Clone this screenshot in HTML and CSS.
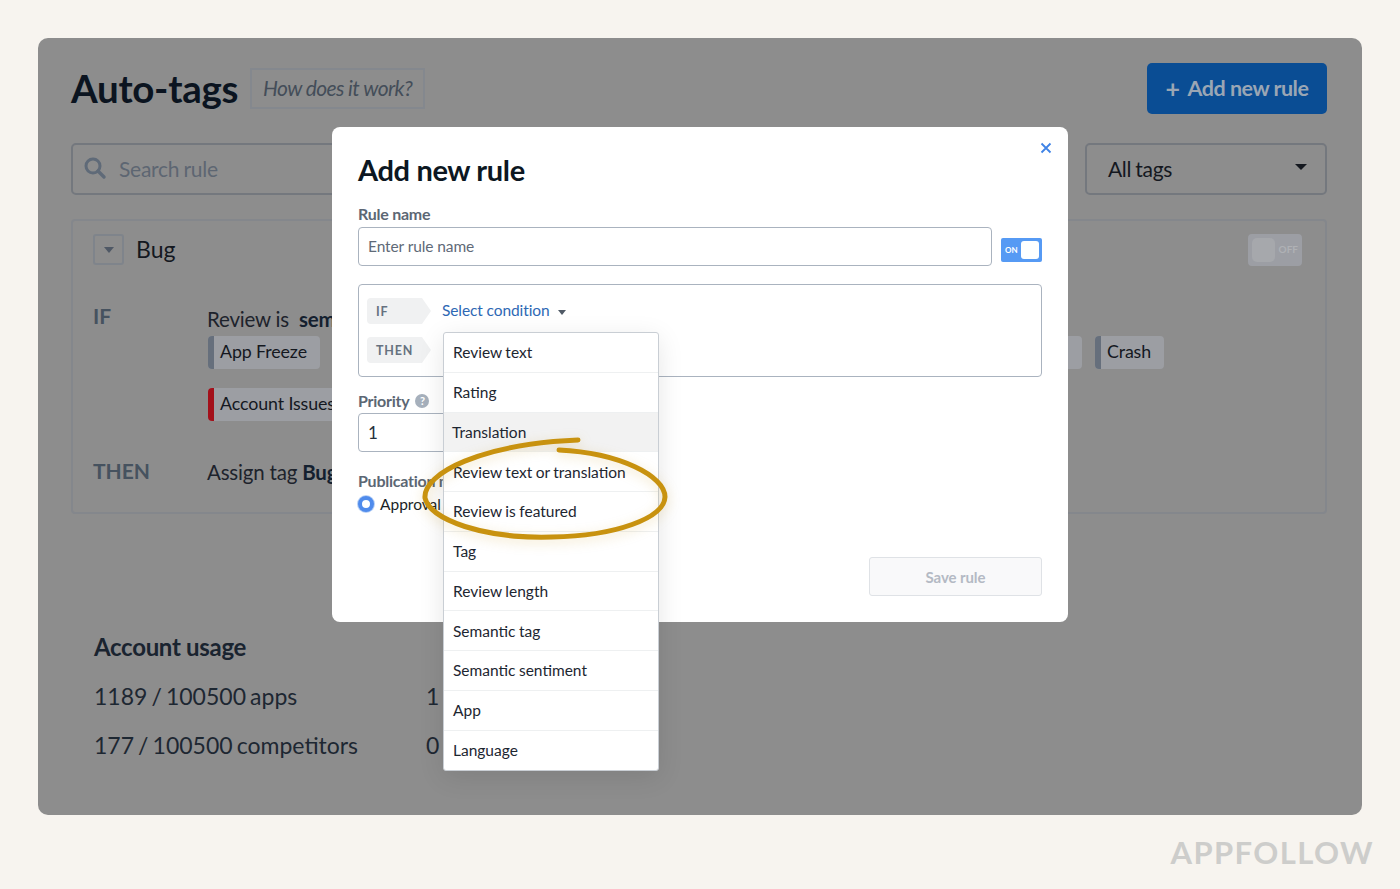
FILE: index.html
```html
<!DOCTYPE html>
<html lang="en">
<head>
<meta charset="utf-8">
<title>Auto-tags</title>
<link rel="stylesheet" href="styles.css">
</head>
<body>
<main class="card">
  <header class="top">
    <h1 class="title">Auto-tags</h1>
    <span class="how">How does it work?</span>
    <span class="add-btn"><span class="plus">+</span>Add new rule</span>
  </header>
  <div class="filters">
    <div class="search">
      <svg class="search-ico" width="24" height="24" viewBox="0 0 24 24"><circle cx="10" cy="10" r="7" fill="none" stroke="#5f6a78" stroke-width="3"/><path d="M15 15l6 6" stroke="#5f6a78" stroke-width="3.4" stroke-linecap="round"/></svg>
      <span>Search rule</span>
    </div>
    <div class="all-tags"><span>All tags</span><i class="caret dark"></i></div>
  </div>
  <section class="rule">
    <div class="rule-head">
      <span class="exp"><i class="caret small"></i></span>
      <span class="rule-name">Bug</span>
      <span class="off"><i class="off-knob"></i><b>OFF</b></span>
    </div>
    <div class="rule-body">
      <div class="rule-row">
        <span class="kw">IF</span>
        <div class="rule-main">
          <p class="line">Review is&nbsp; <b>semantic</b></p>
          <div class="chips">
            <span class="chip"><i class="bar gray"></i>App Freeze</span>
            <span class="chip filler"><i class="bar yellow"></i></span>
            <span class="chip"><i class="bar gray"></i>Crash</span>
            <span class="chip"><i class="bar red"></i>Account Issues</span>
          </div>
        </div>
      </div>
      <div class="rule-row then">
        <span class="kw">THEN</span>
        <p class="line">Assign tag <b>Bug</b></p>
      </div>
    </div>
  </section>
  <section class="usage">
    <h2 class="usage-title">Account usage</h2>
    <div class="usage-grid">
      <span>1189 / 100500 apps</span><span>1</span>
      <span>177 / 100500 competitors</span><span>0</span>
    </div>
  </section>
</main>
<footer class="mark">APPFOLLOW</footer>

<div class="modal">
  <span class="close">
    <svg width="12" height="12" viewBox="0 0 12 12"><path d="M1.5 1.5l9 9M10.5 1.5l-9 9" stroke="#3f83e6" stroke-width="1.8"/></svg>
  </span>
  <h2 class="modal-title">Add new rule</h2>
  <label class="lbl">Rule name</label>
  <div class="name-row">
    <div class="input name-input">Enter rule name</div>
    <span class="on"><b>ON</b><i class="on-knob"></i></span>
  </div>
  <div class="cond">
    <div class="cond-row"><span class="step">IF</span><span class="select">Select condition</span><i class="caret tiny"></i></div>
    <div class="cond-row"><span class="step">THEN</span></div>
  </div>
  <div class="lbl lbl-pri">Priority <span class="q">?</span></div>
  <div class="input pri">1</div>
  <div class="lbl lbl-pub">Publication mode</div>
  <div class="radio-row"><i class="radio"></i><span>Approval</span></div>
  <div class="save-row"><span class="save">Save rule</span></div>
</div>

<ul class="menu">
  <li>Review text</li>
  <li>Rating</li>
  <li class="hl">Translation</li>
  <li>Review text or translation</li>
  <li>Review is featured</li>
  <li>Tag</li>
  <li>Review length</li>
  <li>Semantic tag</li>
  <li>Semantic sentiment</li>
  <li>App</li>
  <li>Language</li>
</ul>

<svg class="circle" width="260" height="120" viewBox="0 0 260 120">
  <path d="M139 24C200 27 245 50 245 71C244 92 196 110 132 111C64 113 10 94 5 72C3 47 62 18 158 14" fill="none" stroke="#c8920f" stroke-width="5" stroke-linecap="round"/>
</svg>
</body>
</html>
```
FILE: styles.css
```css
* { box-sizing: border-box; }
html, body { margin: 0; padding: 0; }
body {
  width: 1400px; height: 889px; overflow: hidden; position: relative;
  background: #f7f4ef; font-family: Lato, "Liberation Sans", sans-serif; color: #14181f;
}
p, h1, h2, ul { margin: 0; padding: 0; }
.card {
  margin: 38px 38px 0; width: 1324px; height: 777px; background: #8d8d8d;
  border-radius: 10px; padding: 25px 35px 0 33px; overflow: hidden;
}
.top { display: flex; align-items: center; height: 51px; }
.title { font-size: 38.5px; font-weight: 700; color: #0b1420; letter-spacing: -0.3px; padding-bottom: 2px; }
.how {
  margin-left: 12px; height: 41px; padding: 0 11px 1px; display: flex; align-items: center;
  border: 2px solid #84888e; font-style: italic; font-size: 21px; color: #444d59; letter-spacing: -0.6px; margin-top: -1px;
}
.add-btn {
  margin-left: auto; width: 180px; height: 51px; background: #0a4d94; border-radius: 5px; padding-bottom: 2px;
  color: #9aa6b4; font-size: 21.5px; font-weight: 700; display: flex; align-items: center; justify-content: center;
  letter-spacing: -0.5px;
}
.plus { margin-right: 8px; font-size: 25px; }
.filters { display: flex; justify-content: space-between; margin-top: 29px; }
.search, .all-tags {
  height: 52px; border: 2px solid #74787e; border-radius: 5px; display: flex; align-items: center; font-size: 21px; padding-bottom: 2px;
}
.search { width: 320px; padding-left: 10px; color: #5d6672; letter-spacing: -0.25px; word-spacing: -1px; }
.search-ico { margin-right: 12px; }
.all-tags { width: 242px; padding: 0 18px 2px 21px; justify-content: space-between; color: #14181f; letter-spacing: -0.3px; word-spacing: -1px; }
.caret { display: block; width: 0; height: 0; border-left: 6px solid transparent; border-right: 6px solid transparent; border-top: 6px solid #14181f; margin-top: -2px; }
.caret.small { border-top-color: #4f5865; border-width: 6px 5.5px 0; margin: 0; }
.caret.tiny { border-top-color: #505a66; border-width: 5px 4.5px 0; margin: 2px 0 0 8px; }
.rule {
  margin-top: 24px; height: 295px; border: 2px solid #84878c; border-radius: 4px; padding: 0;
}
.rule-head { height: 60px; padding: 13px 23px 0 20px; display: flex; align-items: flex-start; }
.exp {
  width: 31px; height: 31px; border: 2px solid #7f848b; border-radius: 3px; display: flex; align-items: center; justify-content: center;
}
.rule-name { font-size: 23px; margin-left: 12px; line-height: 30px; color: #14181f; }
.off {
  margin-left: auto; width: 54px; height: 32px; background: #9c9ea4; border-radius: 4px; position: relative; display: block;
}
.off-knob { position: absolute; left: 4px; top: 4px; width: 23px; height: 24px; background: #a6a8ac; border-radius: 5px; }
.off b { position: absolute; right: 4px; top: 9px; font-size: 10px; color: #afb1b5; }
.rule-body { padding: 23px 0 0 20px; }
.rule-row { display: flex; }
.kw { width: 114px; font-size: 21px; font-weight: 700; color: #46525f; line-height: 24px; flex: none; }
.rule-main { width: 960px; padding-top: 2px; }
.line { font-size: 20.5px; line-height: 26px; color: #1d232c; letter-spacing: -0.2px; }
.line b { color: #14202f; }
.chips { display: flex; flex-wrap: wrap; gap: 19px 12.5px; margin: 4px 0 0 1px; }
.chip {
  height: 33px; background: #9c9ea3; border-radius: 4px; display: flex; align-items: center; font-size: 17.8px;
  padding: 0 13px 3px 0; color: #14181f; overflow: hidden; letter-spacing: -0.1px;
}
.chip.filler { width: 750px; }
.bar { width: 6px; height: 33px; margin: 0 6px 0 0; flex: none; align-self: flex-start; }
.bar.gray { background: #666f7c; }
.bar.red { background: #a3101a; }
.bar.yellow { background: #a39a62; }
.then { margin-top: 38px; align-items: flex-start; }
.usage { margin: 118px 0 0 23px; }
.usage-title { font-size: 24px; font-weight: 700; color: #1a2430; letter-spacing: -0.3px; }
.usage-grid { display: grid; grid-template-columns: 332px 40px; row-gap: 20px; margin-top: 21px; font-size: 23px; color: #1d2732; line-height: 29px; word-spacing: -1.8px; }

.modal {
  position: absolute; left: 332px; top: 127px; width: 736px; height: 495px; background: #fff; border-radius: 8px;
  padding: 24px 26px 0;
}
.close { position: absolute; right: 16px; top: 15px; line-height: 0; }
.modal-title { font-size: 29px; font-weight: 700; color: #0c1722; line-height: 38px; letter-spacing: -0.35px; }
.lbl { display: block; font-size: 16px; font-weight: 700; color: #5c6774; line-height: 20px; margin-top: 15px; letter-spacing: -0.25px; }
.name-row { display: flex; align-items: center; margin-top: 3px; }
.input { border: 1.5px solid #aab3bf; border-radius: 4px; height: 39px; display: flex; align-items: center; padding: 0 0 2px 9px; font-size: 15.5px; color: #5f6a78; letter-spacing: -0.1px; }
.name-input { width: 634px; }
.on { margin-left: 9px; margin-top: 6px; width: 41px; height: 24px; background: #569af4; border-radius: 2px; position: relative; display: block; }
.on b { position: absolute; left: 4px; top: 7px; font-size: 8px; line-height: 10px; color: #fff; }
.on-knob { position: absolute; right: 3px; top: 3px; width: 18px; height: 18px; border-radius: 3px; background: #fff; }
.cond { margin-top: 18px; width: 684px; height: 93px; border: 1.5px solid #aab3bf; border-radius: 4px; padding: 13px 8px 0; }
.cond-row { display: flex; align-items: center; height: 26px; margin-bottom: 13px; }
.step {
  width: 64px; height: 26px; background: #f0f1f2; color: #667180; font-size: 12.5px; font-weight: 700; letter-spacing: 0.8px; padding-left: 9px;
  display: flex; align-items: center; clip-path: polygon(0 0, 55px 0, 64px 50%, 55px 100%, 0 100%); border-radius: 4px 0 0 4px;
}
.select { margin-left: 11px; font-size: 15.5px; color: #2e68b4; padding-bottom: 2px; letter-spacing: -0.1px; }
.lbl-pri { margin-top: 14px; display: flex; align-items: center; gap: 6px; }
.q { width: 14px; height: 14px; border-radius: 50%; background: #a6b0bc; color: #fff; font-size: 11px; display: flex; align-items: center; justify-content: center; }
.input.pri { width: 110px; margin-top: 2px; font-size: 17px; color: #26303c; padding-bottom: 0; }
.lbl-pub { margin-top: 19px; }
.radio-row { display: flex; align-items: center; gap: 6px; font-size: 15.5px; color: #1a1f27; height: 20px; margin-top: 3px; }
.radio { width: 16px; height: 16px; border-radius: 50%; border: 4px solid #4f8bec; background: #fff; display: block; box-shadow: 0 0 0 1px #b9d2f6; }
.save-row { display: flex; justify-content: flex-end; margin-top: 43px; }
.save { width: 173px; height: 39px; border: 1px solid #dfe2e6; border-radius: 3px; background: #f9f9fa; color: #b4bac4; font-size: 15px; font-weight: 700; display: flex; align-items: center; justify-content: center; letter-spacing: -0.1px; }

.menu {
  position: absolute; left: 443px; top: 332px; width: 216px; height: 439px; background: #fff; list-style: none;
  border: 1px solid #c9ced4; border-radius: 3px; box-shadow: 0 6px 26px rgba(0,0,0,.10); overflow: hidden;
}
.menu li { height: 39.75px; padding: 0 0 0 9px; display: flex; align-items: center; font-size: 15.5px; color: #1d2631; border-bottom: 1px solid #eef0f1; word-spacing: -0.5px; }
.menu li:last-child { border-bottom: 0; }
.menu .hl { background: #f2f2f2; padding-left: 8px; }
.circle { position: absolute; left: 420px; top: 426px; filter: drop-shadow(0 3px 6px rgba(200,146,15,.25)); }
.mark { position: absolute; right: 26px; top: 833px; font-size: 31px; letter-spacing: 1.4px; color: #cdcdcb; font-weight: 700; line-height: 38px; }
```
